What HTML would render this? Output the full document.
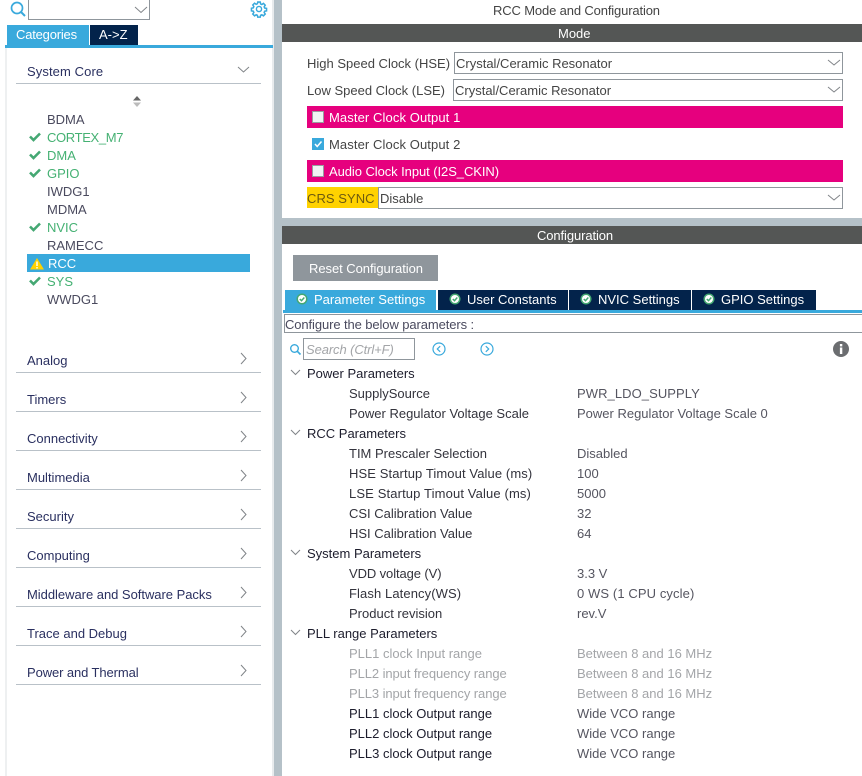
<!DOCTYPE html>
<html><head><meta charset="utf-8"><style>
html,body{margin:0;padding:0;background:#fff}
#p{position:relative;width:862px;height:776px;overflow:hidden;background:#fff;font-family:"Liberation Sans",sans-serif;font-size:13px;color:#444;letter-spacing:0}
.t{position:absolute;white-space:nowrap;line-height:22px;height:22px}
.b{position:absolute}
.g{color:#45b173;left:47px}
.n{color:#4a4a5e;left:47px}
.h{left:27px;color:#2a3060}
.l{position:absolute;left:16px;width:245px;height:1px;background:#b9c1c8}
.sel{position:absolute;box-sizing:border-box;border:1px solid #8f969c;background:#fff}
.pr{left:349px;color:#33333c}
.v{left:577px;color:#555560}
.d{color:#a3a5a8}
.s{left:307px;color:#1c1c2c}
.wt{color:#fff}
svg{position:absolute;overflow:visible}
</style></head><body><div id="p">
<!-- strips -->
<div class="b" style="left:272px;top:0;width:2px;height:776px;background:#e8ebed"></div>
<div class="b" style="left:274px;top:0;width:8px;height:776px;background:#b5c1c8"></div>
<div class="b" style="left:282px;top:218px;width:580px;height:8px;background:#b5c1c8"></div>
<div class="b" style="left:5px;top:48px;width:2px;height:728px;background:#eef0f1"></div>

<!-- top left -->
<svg style="left:0;top:0" width="30" height="20"><circle cx="17" cy="8" r="5.500" fill="none" stroke="#39a9dc" stroke-width="1.700"/><path d="M21 12L25 16" stroke="#39a9dc" stroke-width="2" fill="none"/></svg>
<div class="sel" style="left:28px;top:-2px;width:122px;height:22px"></div>
<svg style="left:134px;top:6px" width="14" height="8"><path d="M1 1L7 6.500L13 1" fill="none" stroke="#808488" stroke-width="1"/></svg>
<svg style="left:251px;top:1px" width="16" height="16" viewBox="0 0 18 18"><circle cx="9" cy="9" r="2.900" fill="none" stroke="#39a9dc" stroke-width="1.600"/><path d="M7.600 1.200h2.800l.4 2.100 1.400.6 1.800-1.200 2 2-1.200 1.800.6 1.400 2.100.4v2.800l-2.100.4-.6 1.400 1.200 1.800-2 2-1.800-1.200-1.400.6-.4 2.100H7.600l-.4-2.100-1.400-.6-1.800 1.200-2-2 1.200-1.800-.6-1.400-2.100-.4V8.100l2.100-.4.6-1.400L2 4.500l2-2 1.800 1.200 1.400-.6z" fill="none" stroke="#39a9dc" stroke-width="1.700"/></svg>
<div class="b" style="left:7px;top:25px;width:82px;height:20px;background:#39a9dc"></div>
<div class="b" style="left:90px;top:25px;width:48px;height:20px;background:#03234b"></div>
<div class="t wt" style="left:16px;top:24px;letter-spacing:-.2px">Categories</div>
<div class="t wt" style="left:99px;top:24px">A-&gt;Z</div>
<div class="b" style="left:5px;top:45px;width:268px;height:3px;background:#39a9dc"></div>

<!-- left list -->
<div class="t h" style="top:61px;letter-spacing:.1px">System Core</div>
<svg style="left:237px;top:66px" width="14" height="8"><path d="M1 1L6.500 6L12 1" fill="none" stroke="#808488"/></svg>
<div class="l" style="top:83px"></div>
<svg style="left:132px;top:96px" width="10" height="12"><path d="M5 0L9 4.500H1z" fill="#666"/><path d="M5 11L9 6.500H1z" fill="#bbb"/></svg>
<div class="t n" style="top:109px">BDMA</div>
<div class="t g" style="top:127px;letter-spacing:-.35px">CORTEX_M7</div>
<div class="t g" style="top:145px">DMA</div>
<div class="t g" style="top:163px">GPIO</div>
<div class="t n" style="top:181px">IWDG1</div>
<div class="t n" style="top:199px">MDMA</div>
<div class="t g" style="top:217px">NVIC</div>
<div class="t n" style="top:235px">RAMECC</div>
<div class="b" style="left:27px;top:254px;width:223px;height:18px;background:#39a9dc"></div>
<div class="t wt" style="left:48px;top:253px">RCC</div>
<svg style="left:30px;top:258px" width="14" height="12"><path d="M7 0L14 11.500H0z" fill="#ffd200"/><rect x="6.300" y="3.500" width="1.400" height="4.500" fill="#fff"/><rect x="6.300" y="9" width="1.400" height="1.500" fill="#fff"/></svg>
<div class="t g" style="top:271px">SYS</div>
<div class="t n" style="top:289px">WWDG1</div>
<svg style="left:29px;top:132px" width="12" height="10"><path d="M1 4.500L4.500 8L11 1.500" fill="none" stroke="#45a873" stroke-width="2.600"/></svg>
<svg style="left:29px;top:150px" width="12" height="10"><path d="M1 4.500L4.500 8L11 1.500" fill="none" stroke="#45a873" stroke-width="2.600"/></svg>
<svg style="left:29px;top:168px" width="12" height="10"><path d="M1 4.500L4.500 8L11 1.500" fill="none" stroke="#45a873" stroke-width="2.600"/></svg>
<svg style="left:29px;top:222px" width="12" height="10"><path d="M1 4.500L4.500 8L11 1.500" fill="none" stroke="#45a873" stroke-width="2.600"/></svg>
<svg style="left:29px;top:276px" width="12" height="10"><path d="M1 4.500L4.500 8L11 1.500" fill="none" stroke="#45a873" stroke-width="2.600"/></svg>

<div class="t h" style="top:350px">Analog</div><div class="l" style="top:372px"></div>
<div class="t h" style="top:389px">Timers</div><div class="l" style="top:411px"></div>
<div class="t h" style="top:428px">Connectivity</div><div class="l" style="top:450px"></div>
<div class="t h" style="top:467px">Multimedia</div><div class="l" style="top:489px"></div>
<div class="t h" style="top:506px">Security</div><div class="l" style="top:528px"></div>
<div class="t h" style="top:545px">Computing</div><div class="l" style="top:567px"></div>
<div class="t h" style="top:584px;letter-spacing:-.03px">Middleware and Software Packs</div><div class="l" style="top:606px"></div>
<div class="t h" style="top:623px">Trace and Debug</div><div class="l" style="top:645px"></div>
<div class="t h" style="top:662px;letter-spacing:-.1px">Power and Thermal</div><div class="l" style="top:684px"></div>
<svg style="left:240px;top:352px" width="8" height="14"><path d="M1 1L6 6.500L1 12" fill="none" stroke="#808488"/></svg>
<svg style="left:240px;top:391px" width="8" height="14"><path d="M1 1L6 6.500L1 12" fill="none" stroke="#808488"/></svg>
<svg style="left:240px;top:430px" width="8" height="14"><path d="M1 1L6 6.500L1 12" fill="none" stroke="#808488"/></svg>
<svg style="left:240px;top:469px" width="8" height="14"><path d="M1 1L6 6.500L1 12" fill="none" stroke="#808488"/></svg>
<svg style="left:240px;top:508px" width="8" height="14"><path d="M1 1L6 6.500L1 12" fill="none" stroke="#808488"/></svg>
<svg style="left:240px;top:547px" width="8" height="14"><path d="M1 1L6 6.500L1 12" fill="none" stroke="#808488"/></svg>
<svg style="left:240px;top:586px" width="8" height="14"><path d="M1 1L6 6.500L1 12" fill="none" stroke="#808488"/></svg>
<svg style="left:240px;top:625px" width="8" height="14"><path d="M1 1L6 6.500L1 12" fill="none" stroke="#808488"/></svg>
<svg style="left:240px;top:664px" width="8" height="14"><path d="M1 1L6 6.500L1 12" fill="none" stroke="#808488"/></svg>

<!-- mode -->
<div class="t" style="left:493px;top:0;letter-spacing:-.14px">RCC Mode and Configuration</div>
<div class="b" style="left:282px;top:24px;width:580px;height:18px;background:#545655"></div>
<div class="t wt" style="left:558px;top:23px">Mode</div>
<div class="t" style="left:307px;top:53px">High Speed Clock (HSE)</div>
<div class="sel" style="left:454px;top:52px;width:389px;height:22px"></div>
<div class="t" style="left:456px;top:53px">Crystal/Ceramic Resonator</div>
<div class="t" style="left:307px;top:80px">Low Speed Clock (LSE)</div>
<div class="sel" style="left:453px;top:79px;width:390px;height:22px"></div>
<div class="t" style="left:455px;top:80px">Crystal/Ceramic Resonator</div>
<div class="b" style="left:307px;top:106px;width:536px;height:22px;background:#e6007e"></div>
<div class="b" style="left:312px;top:111px;width:12px;height:12px;box-sizing:border-box;border:1px solid #9a9da0;background:#f1f3f4"></div>
<div class="t wt" style="left:329px;top:107px;letter-spacing:.1px">Master Clock Output 1</div>
<div class="b" style="left:312px;top:138px;width:12px;height:12px;background:#39a9dc"></div>
<svg style="left:312px;top:138px" width="12" height="12"><path d="M3 6L5.200 8.500L9.500 3.500" fill="none" stroke="#fff" stroke-width="1.500"/></svg>
<div class="t" style="left:329px;top:134px;letter-spacing:.1px">Master Clock Output 2</div>
<div class="b" style="left:307px;top:160px;width:536px;height:22px;background:#e6007e"></div>
<div class="b" style="left:312px;top:165px;width:12px;height:12px;box-sizing:border-box;border:1px solid #9a9da0;background:#f1f3f4"></div>
<div class="t wt" style="left:329px;top:161px;letter-spacing:-.07px">Audio Clock Input (I2S_CKIN)</div>
<div class="b" style="left:307px;top:187px;width:71px;height:21px;background:#ffd200"></div>
<div class="t" style="left:307px;top:188px;color:#6d5a10;letter-spacing:.05px">CRS SYNC</div>
<div class="sel" style="left:378px;top:187px;width:465px;height:22px"></div>
<div class="t" style="left:380px;top:188px">Disable</div>
<svg style="left:827px;top:59px" width="14" height="8"><path d="M1 1L7 6L13 1" fill="none" stroke="#808488"/></svg>
<svg style="left:827px;top:86px" width="14" height="8"><path d="M1 1L7 6L13 1" fill="none" stroke="#808488"/></svg>
<svg style="left:827px;top:194px" width="14" height="8"><path d="M1 1L7 6L13 1" fill="none" stroke="#808488"/></svg>

<!-- config -->
<div class="b" style="left:282px;top:226px;width:580px;height:18px;background:#545655"></div>
<div class="t wt" style="left:537px;top:225px;letter-spacing:-.1px">Configuration</div>
<div class="b" style="left:293px;top:255px;width:145px;height:26px;background:#8f969c"></div>
<div class="t wt" style="left:309px;top:258px;letter-spacing:-.05px">Reset Configuration</div>
<div class="b" style="left:285px;top:290px;width:151px;height:20px;background:#39a9dc"></div>
<div class="b" style="left:438px;top:290px;width:130px;height:20px;background:#03234b"></div>
<div class="b" style="left:569px;top:290px;width:122px;height:20px;background:#03234b"></div>
<div class="b" style="left:692px;top:290px;width:124px;height:20px;background:#03234b"></div>
<div class="b" style="left:283px;top:310px;width:579px;height:3px;background:#39a9dc"></div>
<div class="t wt" style="left:314px;top:289px">Parameter Settings</div>
<div class="t wt" style="left:467px;top:289px">User Constants</div>
<div class="t wt" style="left:598px;top:289px">NVIC Settings</div>
<div class="t wt" style="left:721px;top:289px">GPIO Settings</div>
<svg style="left:296px;top:293px" width="12" height="12"><circle cx="6" cy="6" r="5.500" fill="#45a873"/><circle cx="6" cy="6" r="4" fill="#fff"/><path d="M3.800 6L5.500 7.700L8.300 4.500" fill="none" stroke="#45a873" stroke-width="1.500"/></svg>
<svg style="left:449px;top:293px" width="12" height="12"><circle cx="6" cy="6" r="5.500" fill="#45a873"/><circle cx="6" cy="6" r="4" fill="#fff"/><path d="M3.800 6L5.500 7.700L8.300 4.500" fill="none" stroke="#45a873" stroke-width="1.500"/></svg>
<svg style="left:580px;top:293px" width="12" height="12"><circle cx="6" cy="6" r="5.500" fill="#45a873"/><circle cx="6" cy="6" r="4" fill="#fff"/><path d="M3.800 6L5.500 7.700L8.300 4.500" fill="none" stroke="#45a873" stroke-width="1.500"/></svg>
<svg style="left:703px;top:293px" width="12" height="12"><circle cx="6" cy="6" r="5.500" fill="#45a873"/><circle cx="6" cy="6" r="4" fill="#fff"/><path d="M3.800 6L5.500 7.700L8.300 4.500" fill="none" stroke="#45a873" stroke-width="1.500"/></svg>
<div class="b" style="left:284px;top:314px;width:578px;height:19px;box-sizing:border-box;border:1px solid #8f969c;border-right:0"></div>
<div class="t" style="left:285px;top:314px;color:#4a4a5e;letter-spacing:-.1px">Configure the below parameters :</div>
<svg style="left:289px;top:343px" width="14" height="14"><circle cx="5.500" cy="5.500" r="3.800" fill="none" stroke="#39a9dc" stroke-width="1.400"/><path d="M8.200 8.200L11.500 11.500" stroke="#39a9dc" stroke-width="1.600"/></svg>
<div class="sel" style="left:303px;top:338px;width:112px;height:22px"></div>
<div class="t" style="left:306px;top:339px;color:#a3a5a8;font-style:italic;letter-spacing:-.1px">Search (Ctrl+F)</div>
<svg style="left:432px;top:342px" width="14" height="14"><circle cx="7" cy="7" r="6" fill="none" stroke="#39a9dc" stroke-width="1.200"/><path d="M8.200 4.200L5.300 7L8.200 9.800" fill="none" stroke="#39a9dc" stroke-width="1.200"/></svg>
<svg style="left:480px;top:342px" width="14" height="14"><circle cx="7" cy="7" r="6" fill="none" stroke="#39a9dc" stroke-width="1.200"/><path d="M5.800 4.200L8.700 7L5.800 9.800" fill="none" stroke="#39a9dc" stroke-width="1.200"/></svg>
<svg style="left:833px;top:341px" width="16" height="16"><circle cx="8" cy="8" r="8" fill="#6b6d70"/><rect x="6.900" y="6.500" width="2.400" height="6.500" fill="#fff"/><rect x="6.900" y="3" width="2.400" height="2.400" fill="#fff"/></svg>

<div class="t s" style="top:363px">Power Parameters</div>
<div class="t pr" style="top:383px">SupplySource</div><div class="t v" style="top:383px;letter-spacing:.07px">PWR_LDO_SUPPLY</div>
<div class="t pr" style="top:403px">Power Regulator Voltage Scale</div><div class="t v" style="top:403px">Power Regulator Voltage Scale 0</div>
<div class="t s" style="top:423px">RCC Parameters</div>
<div class="t pr" style="top:443px">TIM Prescaler Selection</div><div class="t v" style="top:443px">Disabled</div>
<div class="t pr" style="top:463px;letter-spacing:.1px">HSE Startup Timout Value (ms)</div><div class="t v" style="top:463px">100</div>
<div class="t pr" style="top:483px;letter-spacing:.13px">LSE Startup Timout Value (ms)</div><div class="t v" style="top:483px">5000</div>
<div class="t pr" style="top:503px">CSI Calibration Value</div><div class="t v" style="top:503px">32</div>
<div class="t pr" style="top:523px">HSI Calibration Value</div><div class="t v" style="top:523px">64</div>
<div class="t s" style="top:543px">System Parameters</div>
<div class="t pr" style="top:563px;letter-spacing:-.1px">VDD voltage (V)</div><div class="t v" style="top:563px">3.3 V</div>
<div class="t pr" style="top:583px;letter-spacing:.1px">Flash Latency(WS)</div><div class="t v" style="top:583px;letter-spacing:.1px">0 WS (1 CPU cycle)</div>
<div class="t pr" style="top:603px">Product revision</div><div class="t v" style="top:603px">rev.V</div>
<div class="t s" style="top:623px">PLL range Parameters</div>
<div class="t pr d" style="top:643px">PLL1 clock Input range</div><div class="t v d" style="top:643px">Between 8 and 16 MHz</div>
<div class="t pr d" style="top:663px;letter-spacing:-.08px">PLL2 input frequency range</div><div class="t v d" style="top:663px">Between 8 and 16 MHz</div>
<div class="t pr d" style="top:683px;letter-spacing:-.08px">PLL3 input frequency range</div><div class="t v d" style="top:683px">Between 8 and 16 MHz</div>
<div class="t pr" style="top:703px;color:#1c1c2c">PLL1 clock Output range</div><div class="t v" style="top:703px">Wide VCO range</div>
<div class="t pr" style="top:723px;color:#1c1c2c">PLL2 clock Output range</div><div class="t v" style="top:723px">Wide VCO range</div>
<div class="t pr" style="top:743px;color:#1c1c2c">PLL3 clock Output range</div><div class="t v" style="top:743px">Wide VCO range</div>
<svg style="left:290px;top:369px" width="12" height="8"><path d="M1 1L5.500 5.500L10 1" fill="none" stroke="#808488"/></svg>
<svg style="left:290px;top:429px" width="12" height="8"><path d="M1 1L5.500 5.500L10 1" fill="none" stroke="#808488"/></svg>
<svg style="left:290px;top:549px" width="12" height="8"><path d="M1 1L5.500 5.500L10 1" fill="none" stroke="#808488"/></svg>
<svg style="left:290px;top:629px" width="12" height="8"><path d="M1 1L5.500 5.500L10 1" fill="none" stroke="#808488"/></svg>
</div></body></html>
